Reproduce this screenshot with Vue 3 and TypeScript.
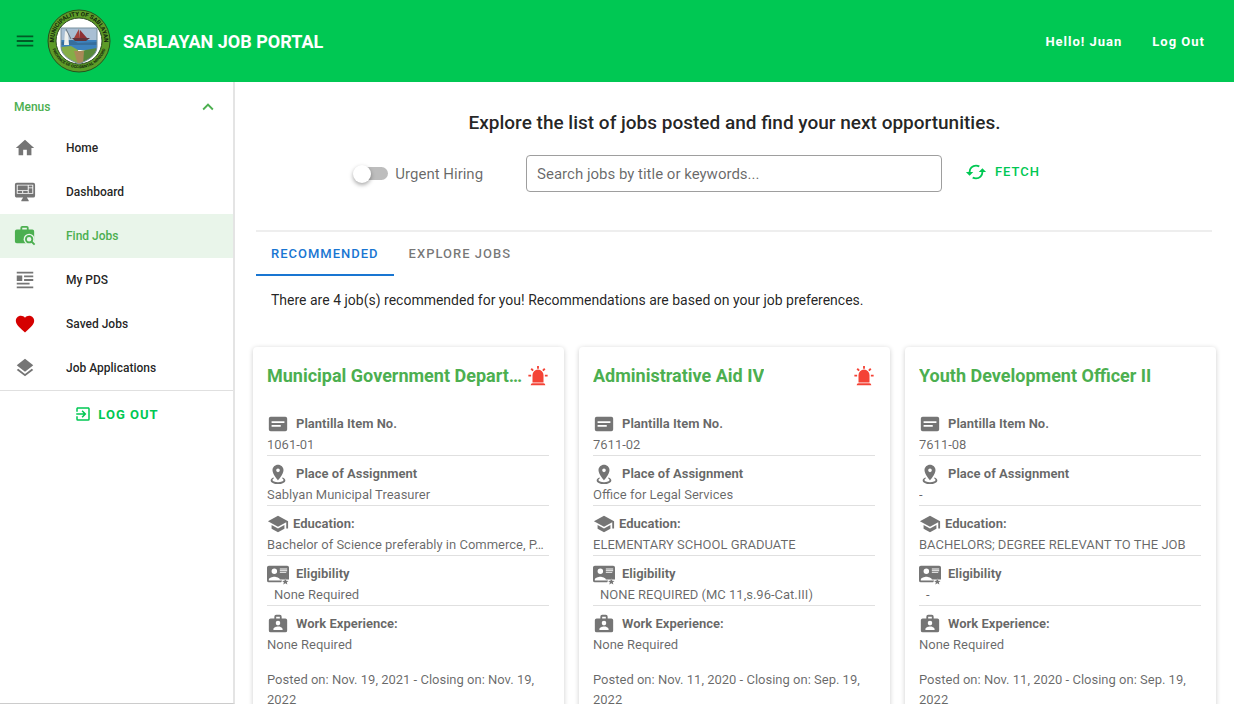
<script setup lang="ts">
import { ref } from 'vue'

interface MenuItem {
  label: string
  icon: string
  tone?: string
}

interface Field {
  label: string
  value: string
  icon: string
  variant?: string
}

interface Job {
  title: string
  urgent: boolean
  fields: Field[]
  posted: string
}

const icons: Record<string, string> = {
  menu: 'M3,6H21V8H3V6M3,11H21V13H3V11M3,16H21V18H3V16Z',
  home: 'M10,20V14H14V20H19V12H22L12,3L2,12H5V20H10Z',
  dashboard:
    'M21,14V4H3V14H21M21,2A2,2 0 0,1 23,4V16A2,2 0 0,1 21,18H14L16,21V22H8V21L10,18H3C1.89,18 1,17.1 1,16V4C1,2.89 1.89,2 3,2H21M4,5H15V10H4V5M16,5H20V7H16V5M20,8V13H16V8H20M4,11H9V13H4V11M10,11H15V13H10V11Z',
  pds: 'M3,3H21V5H3V3M3,7H9V13H3V7M11,7H21V9H11V7M11,11H21V13H11V11M3,15H17V17H3V15M3,19H21V21H3V19Z',
  heart:
    'M12,21.35L10.55,20.03C5.4,15.36 2,12.27 2,8.5C2,5.41 4.42,3 7.5,3C9.24,3 10.91,3.81 12,5.08C13.09,3.81 14.76,3 16.5,3C19.58,3 22,5.41 22,8.5C22,12.27 18.6,15.36 13.45,20.03L12,21.35Z',
  layers:
    'M12,16L19.36,10.27L21,9L12,2L3,9L4.63,10.27M12,18.54L4.62,12.81L3,14.07L12,21.07L21,14.07L19.37,12.8L12,18.54Z',
  exit: 'M19,3H5C3.89,3 3,3.89 3,5V9H5V5H19V19H5V15H3V19A2,2 0 0,0 5,21H19A2,2 0 0,0 21,19V5C21,3.89 20.1,3 19,3M10.08,15.58L11.5,17L16.5,12L11.5,7L10.08,8.41L12.67,11H3V13H12.67L10.08,15.58Z',
  chevron: 'M7.41,15.41L12,10.83L16.59,15.41L18,14L12,8L6,14L7.41,15.41Z',
  cached:
    'M19,8L15,12H18A6,6 0 0,1 12,18C11,18 10.03,17.75 9.2,17.3L7.74,18.76C8.97,19.54 10.43,20 12,20A8,8 0 0,0 20,12H23M6,12A6,6 0 0,1 12,6C13,6 13.97,6.25 14.8,6.7L16.26,5.24C15.03,4.46 13.57,4 12,4A8,8 0 0,0 4,12H1L5,16L9,12',
  alarm:
    'M6,6.9L3.87,4.78L5.28,3.37L7.4,5.5L6,6.9M13,1V4H11V1H13M20.13,4.78L18,6.9L16.6,5.5L18.72,3.37L20.13,4.78M4.5,10.5V12.5H1.5V10.5H4.5M19.5,10.5H22.5V12.5H19.5V10.5M6,20H18A2,2 0 0,1 20,22H4A2,2 0 0,1 6,20M12,5A6,6 0 0,1 18,11V19H6V11A6,6 0 0,1 12,5Z',
  card: 'M20,4H4A2,2 0 0,0 2,6V18A2,2 0 0,0 4,20H20A2,2 0 0,0 22,18V6A2,2 0 0,0 20,4M5,9V11H19V9H5M5,13V15H15V13H5Z',
  marker:
    'M12,2C15.31,2 18,4.66 18,7.95C18,12.41 12,19 12,19C12,19 6,12.41 6,7.95C6,4.66 8.69,2 12,2M12,6A2,2 0 0,0 10,8A2,2 0 0,0 12,10A2,2 0 0,0 14,8A2,2 0 0,0 12,6M20,19C20,21.21 16.42,23 12,23C7.58,23 4,21.21 4,19C4,17.71 5.22,16.56 7.11,15.83L7.75,16.74C6.67,17.19 6,17.81 6,18.5C6,19.88 8.69,21 12,21C15.31,21 18,19.88 18,18.5C18,17.81 17.33,17.19 16.25,16.74L16.89,15.83C18.78,16.56 20,17.71 20,19Z',
  school: 'M12,3L1,9L12,15L21,10.09V17H23V9M5,13.18V17.18L12,21L19,17.18V13.18L12,17L5,13.18Z',
  eligibility:
    'M22,3H2A2,2 0 0,0 0,5V19A2,2 0 0,0 2,21H15.5L16.5,19H2V18C2,16 6,14.9 8,14.9C10,14.9 14,16 14,18H24V5A2,2 0 0,0 22,3M8,6A3,3 0 0,1 11,9A3,3 0 0,1 8,12A3,3 0 0,1 5,9A3,3 0 0,1 8,6M14,6V7H22V6H14M14,8V9H22V8H14M14,10V11H21V10H14M20,17L21,19.3L23.5,19.5L21.6,21.1L22.2,23.5L20,22.2L17.8,23.5L18.4,21.1L16.5,19.5L19,19.3Z',
  briefcase:
    'M14,6V4H10V6H14M20,6A2,2 0 0,1 22,8V19A2,2 0 0,1 20,21H4A2,2 0 0,1 2,19V8A2,2 0 0,1 4,6H8V4A2,2 0 0,1 10,2H14A2,2 0 0,1 16,4V6H20M12,8.5A2.5,2.5 0 0,0 9.5,11A2.5,2.5 0 0,0 12,13.5A2.5,2.5 0 0,0 14.5,11A2.5,2.5 0 0,0 12,8.5M7,18.5H17V17.5C17,15.8 13.7,14.8 12,14.8C10.3,14.8 7,15.8 7,17.5V18.5Z',
}

const menuItems: MenuItem[] = [
  { label: 'Home', icon: 'home' },
  { label: 'Dashboard', icon: 'dashboard' },
  { label: 'Find Jobs', icon: 'search' },
  { label: 'My PDS', icon: 'pds' },
  { label: 'Saved Jobs', icon: 'heart', tone: 'red' },
  { label: 'Job Applications', icon: 'layers' },
]

function makeFields(item: string, place: string, education: string, eligibility: string): Field[] {
  return [
    { label: 'Plantilla Item No.', value: item, icon: 'card' },
    { label: 'Place of Assignment', value: place, icon: 'marker' },
    { label: 'Education:', value: education, icon: 'school', variant: 'tight' },
    { label: 'Eligibility', value: eligibility, icon: 'eligibility', variant: 'indented' },
    { label: 'Work Experience:', value: 'None Required', icon: 'briefcase' },
  ]
}

const jobs: Job[] = [
  {
    title: 'Municipal Government Depart…',
    urgent: true,
    fields: makeFields(
      '1061-01',
      'Sablyan Municipal Treasurer',
      'Bachelor of Science preferably in Commerce, P…',
      'None Required',
    ),
    posted: 'Posted on: Nov. 19, 2021 - Closing on: Nov. 19, 2022',
  },
  {
    title: 'Administrative Aid IV',
    urgent: true,
    fields: makeFields(
      '7611-02',
      'Office for Legal Services',
      'ELEMENTARY SCHOOL GRADUATE',
      'NONE REQUIRED (MC 11,s.96-Cat.III)',
    ),
    posted: 'Posted on: Nov. 11, 2020 - Closing on: Sep. 19, 2022',
  },
  {
    title: 'Youth Development Officer II',
    urgent: false,
    fields: makeFields('7611-08', '-', 'BACHELORS; DEGREE RELEVANT TO THE JOB', '-'),
    posted: 'Posted on: Nov. 11, 2020 - Closing on: Sep. 19, 2022',
  },
]

const tabs = ['Recommended', 'Explore Jobs']
const activeMenu = ref('Find Jobs')
const activeTab = ref('Recommended')
const menuOpen = ref(true)
const urgentOnly = ref(false)
const keywords = ref('')
</script>

<template>
  <div class="app">
    <header class="bar">
      <button class="icon-button" type="button" aria-label="Toggle menu">
        <svg class="icon" viewBox="0 0 24 24"><path :d="icons.menu" /></svg>
      </button>
      <svg class="seal" viewBox="0 0 64 64" role="img" aria-label="Municipality seal">
        <defs>
          <path id="arc-top" d="M8,39 A25,25 0 1 1 56,39" />
          <path id="arc-bottom" d="M4.6,37 A28,28 0 0 0 59.4,37" />
          <clipPath id="shield">
            <path d="M14,19 H50 V38 C50,47 39,52 32,55 C25,52 14,47 14,38 Z" />
          </clipPath>
        </defs>
        <circle cx="32" cy="32" r="31" fill="#5d9b28" stroke="#27511d" />
        <circle cx="32" cy="32" r="23" fill="#fff" stroke="#2c4a20" />
        <g clip-path="url(#shield)">
          <rect x="14" y="18" width="36" height="16" fill="#a9bfd4" />
          <rect x="14" y="31" width="36" height="10" fill="#3d82bd" />
          <path d="M14,33 L25,31 L31,34 L50,33 V36 H14Z" fill="#376e9d" />
          <path d="M14,38 L24,37 L31,41 L33,56 H14Z" fill="#85ad47" />
          <path d="M33,42 L50,39 V56 H32Z" fill="#57883b" />
          <path d="M27,42 L37,42 L36,56 H31Z" fill="#a98958" />
          <path d="M32,20 L27,29 H33Z" fill="#a3403b" />
          <path d="M33,21 V29 H40Z" fill="#8f3135" />
          <path d="M25,29 H43 L39,32 H28Z" fill="#61343c" />
          <path d="M18,22 L21,23 L22,36 H17Z" fill="#eef0ed" />
          <path d="M19,20 L24,30" stroke="#66737b" stroke-width="1" />
        </g>
        <path
          d="M14,19 H50 V38 C50,47 39,52 32,55 C25,52 14,47 14,38 Z"
          fill="none"
          stroke="#78909c"
        />
        <text class="seal-top">
          <textPath href="#arc-top" startOffset="50%" text-anchor="middle">MUNICIPALITY OF SABLAYAN</textPath>
        </text>
        <text class="seal-bottom">
          <textPath href="#arc-bottom" startOffset="50%" text-anchor="middle">PROVINCE OF OCCIDENTAL MINDORO</textPath>
        </text>
      </svg>
      <h1 class="brand">SABLAYAN JOB PORTAL</h1>
      <nav class="bar-links" aria-label="Account">
        <a href="#account">Hello! Juan</a>
        <a href="#logout">Log Out</a>
      </nav>
    </header>

    <div class="body">
      <aside class="sidebar">
        <button class="group" type="button" :aria-expanded="menuOpen" @click="menuOpen = !menuOpen">
          <span>Menus</span>
          <svg class="icon" viewBox="0 0 24 24"><path :d="icons.chevron" /></svg>
        </button>
        <nav v-if="menuOpen" class="menu" aria-label="Menus">
          <a
            v-for="item in menuItems"
            :key="item.label"
            href="#"
            class="menu-item"
            :class="{ active: item.label === activeMenu }"
            @click.prevent="activeMenu = item.label"
          >
            <svg class="icon" :class="item.tone" viewBox="0 0 24 24">
              <template v-if="item.icon === 'search'">
                <mask id="lens">
                  <rect width="24" height="24" fill="#fff" />
                  <circle cx="16.5" cy="15.5" r="6" fill="#000" />
                  <path d="M17,16 L24,23" stroke="#000" stroke-width="5" />
                </mask>
                <path
                  mask="url(#lens)"
                  d="M14,5V3H9V5H14M20,5A2,2 0 0,1 22,7V18A2,2 0 0,1 20,20H3A2,2 0 0,1 1,18V7A2,2 0 0,1 3,5H7V3A2,2 0 0,1 9,1H14A2,2 0 0,1 16,3V5H20Z"
                />
                <circle cx="16.5" cy="15.5" r="3.5" fill="none" stroke="currentColor" stroke-width="2" />
                <path d="M19,18 L22.5,21.5" stroke="currentColor" stroke-width="2" />
              </template>
              <path v-else :d="icons[item.icon]" />
            </svg>
            <span>{{ item.label }}</span>
          </a>
        </nav>
        <div class="sidebar-foot">
          <button class="text-button" type="button">
            <svg class="icon small" viewBox="0 0 24 24"><path :d="icons.exit" /></svg>
            LOG OUT
          </button>
        </div>
      </aside>

      <main class="content">
        <h2 class="headline">Explore the list of jobs posted and find your next opportunities.</h2>
        <form class="filters" @submit.prevent>
          <label class="switch">
            <input v-model="urgentOnly" type="checkbox" role="switch" />
            <span>Urgent Hiring</span>
          </label>
          <input
            v-model="keywords"
            class="search"
            type="text"
            aria-label="Search jobs"
            placeholder="Search jobs by title or keywords..."
          />
          <button class="text-button fetch" type="submit">
            <svg class="icon" viewBox="0 0 24 24"><path :d="icons.cached" /></svg>
            FETCH
          </button>
        </form>

        <section class="results">
          <div class="tabs" role="tablist">
            <button
              v-for="tab in tabs"
              :key="tab"
              class="tab"
              :class="{ active: tab === activeTab }"
              type="button"
              role="tab"
              :aria-selected="tab === activeTab"
              @click="activeTab = tab"
            >
              {{ tab }}
            </button>
          </div>
          <p class="summary">
            There are 4 job(s) recommended for you! Recommendations are based on your job preferences.
          </p>
        </section>

        <div class="cards">
          <article v-for="job in jobs" :key="job.title" class="card">
            <div class="card-head">
              <h3>{{ job.title }}</h3>
              <svg v-if="job.urgent" class="icon alarm" viewBox="0 0 24 24" role="img" aria-label="Urgent">
                <path :d="icons.alarm" />
              </svg>
            </div>
            <dl>
              <div v-for="field in job.fields" :key="field.label" class="field" :class="field.variant">
                <dt>
                  <svg class="icon" viewBox="0 0 24 24"><path fill-rule="evenodd" :d="icons[field.icon]" /></svg>
                  {{ field.label }}
                </dt>
                <dd>{{ field.value }}</dd>
              </div>
            </dl>
            <p class="posted">{{ job.posted }}</p>
          </article>
        </div>
      </main>
    </div>
  </div>
</template>

<style>
body {
  margin: 0;
}
</style>

<style scoped>
.app {
  display: flex;
  flex-direction: column;
  height: 100vh;
  overflow: hidden;
  background: #fff;
  color: rgba(0, 0, 0, 0.87);
  font-family: Roboto, 'Liberation Sans', sans-serif;
  font-size: 13px;
}

.app *,
.app *::before {
  box-sizing: border-box;
}

h1,
h2,
h3,
p,
dl,
dd {
  margin: 0;
}

button {
  padding: 0;
  border: 0;
  background: none;
  color: inherit;
  font: inherit;
  cursor: pointer;
}

a {
  color: inherit;
  text-decoration: none;
}

.icon {
  flex: none;
  width: 22px;
  height: 22px;
  fill: currentColor;
}

.bar {
  display: flex;
  flex: none;
  align-items: center;
  height: 82px;
  padding: 0 29px 0 14px;
  background: #00c853;
  color: #fff;
}

.icon-button {
  display: flex;
  margin-right: 11px;
  color: rgba(0, 0, 0, 0.54);
}

.seal {
  flex: none;
  width: 64px;
  height: 64px;
  margin-right: 12px;
}

.seal-top,
.seal-bottom {
  fill: #10240c;
  font-weight: 700;
}

.seal-top {
  font-size: 6px;
}

.seal-bottom {
  font-size: 4px;
}

.brand {
  font-size: 18px;
  font-weight: 700;
}

.bar-links {
  display: flex;
  gap: 30px;
  margin-left: auto;
  font-weight: 700;
  letter-spacing: 1px;
}

.body {
  display: flex;
  flex: 1;
  min-height: 0;
}

.sidebar {
  flex: none;
  width: 235px;
  padding-top: 6px;
  border-right: 2px solid #e4e4e4;
  border-bottom: 1px solid #ccc;
  font-size: 12px;
  font-weight: 500;
}

.group {
  display: flex;
  align-items: center;
  justify-content: space-between;
  width: 100%;
  height: 38px;
  padding: 0 14px;
  color: #4caf50;
}

.menu-item {
  display: flex;
  align-items: center;
  gap: 30px;
  height: 44px;
  padding: 0 14px;
}

.menu-item .icon {
  color: #757575;
}

.menu-item .icon.red {
  color: #d50000;
}

.menu-item.active,
.menu-item.active .icon {
  color: #4caf50;
}

.menu-item.active {
  background: #e9f5ea;
}

.sidebar-foot {
  display: flex;
  justify-content: center;
  padding-top: 13px;
  border-top: 1px solid #e0e0e0;
}

.text-button {
  display: flex;
  align-items: center;
  gap: 8px;
  color: #00c853;
  font-size: 13px;
  font-weight: 500;
  letter-spacing: 1px;
}

.sidebar-foot .text-button {
  font-weight: 700;
}

.icon.small {
  width: 18px;
  height: 20px;
}

.sidebar-foot .text-button {
  gap: 6px;
}

.content {
  flex: 1;
  min-width: 0;
  overflow-y: auto;
  scrollbar-width: none;
}

.headline {
  padding: 27px 20px 0;
  font-size: 19px;
  font-weight: 500;
  line-height: 28px;
  text-align: center;
}

.filters {
  display: grid;
  grid-template-columns: 7fr 10fr 7fr;
  align-items: center;
  margin-top: 18px;
  padding-right: 1px;
}

.switch {
  display: flex;
  align-items: center;
  justify-content: flex-end;
  gap: 7px;
  padding-right: 43px;
  color: rgba(0, 0, 0, 0.6);
  font-size: 15px;
}

.switch input {
  display: flex;
  align-items: center;
  width: 33px;
  height: 13px;
  margin: 0;
  appearance: none;
  border-radius: 7px;
  background: #bdbdbd;
}

.switch input::before {
  content: '';
  width: 18px;
  height: 18px;
  margin-left: -2px;
  border-radius: 50%;
  background: #fff;
  box-shadow: 0 2px 4px rgba(0, 0, 0, 0.35);
}

.switch input:checked::before {
  margin-left: 17px;
}

.search {
  width: 100%;
  height: 37px;
  padding: 0 10px;
  border: 1px solid #9e9e9e;
  border-radius: 4px;
  color: inherit;
  font: inherit;
  font-size: 15px;
}

.search::placeholder {
  color: rgba(0, 0, 0, 0.6);
  opacity: 1;
}

.fetch {
  justify-self: start;
  margin-left: 23px;
  padding-bottom: 4px;
}

.results {
  margin: 38px 22px 0 21px;
  border-top: 2px solid #eee;
}

.tabs {
  display: flex;
}

.tab {
  height: 44px;
  padding: 0 15px;
  border-bottom: 2px solid transparent;
  color: rgba(0, 0, 0, 0.54);
  font-weight: 500;
  letter-spacing: 1px;
  text-transform: uppercase;
}

.tab.active {
  border-color: #1976d2;
  color: #1976d2;
}

.summary {
  padding: 14px 15px 0;
  font-size: 14px;
  line-height: 20px;
}

.cards {
  display: grid;
  grid-template-columns: repeat(3, minmax(0, 1fr));
  gap: 15px;
  padding: 37px 18px 18px;
}

.card {
  padding: 15px 15px 15px 14px;
  border-radius: 4px;
  box-shadow: 0 1px 5px rgba(0, 0, 0, 0.2);
  color: rgba(0, 0, 0, 0.6);
}

.card-head {
  display: flex;
  align-items: center;
  justify-content: space-between;
  height: 28px;
  margin-bottom: 16px;
  color: #4caf50;
}

.card-head h3 {
  min-width: 0;
  overflow: hidden;
  font-size: 18px;
  font-weight: 700;
  line-height: 28px;
  text-overflow: ellipsis;
  white-space: nowrap;
}

.alarm {
  color: #f44336;
}

.field {
  padding-top: 6px;
  border-bottom: 1px solid #e0e0e0;
}

.field:last-child {
  border-bottom: 0;
}

.field dt {
  display: flex;
  align-items: center;
  gap: 7px;
  height: 23px;
  font-weight: 700;
}

.field.tight dt {
  gap: 4px;
}

.field dt .icon {
  color: #757575;
}

.field dd {
  overflow: hidden;
  line-height: 20px;
  text-overflow: ellipsis;
  white-space: nowrap;
}

.field.indented dd {
  padding-left: 7px;
}

.posted {
  padding-top: 15px;
  line-height: 20px;
}
</style>
